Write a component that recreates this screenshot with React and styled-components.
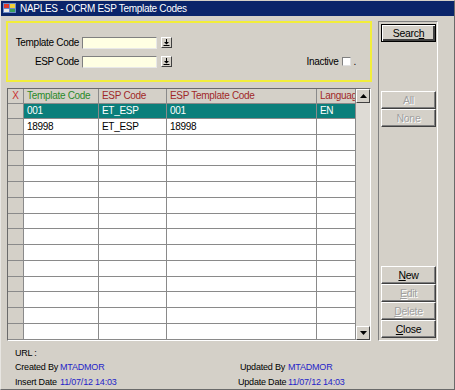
import React from "react";
import styled, { createGlobalStyle } from "styled-components";

const Global = createGlobalStyle`
  body {
    margin: 0;
    background: #ffffff;
    font-family: "Liberation Sans", Arial, sans-serif;
  }
`

const Window = styled.div`
  width: 455px;
  height: 390px;
  box-sizing: border-box;
  background: #d4d0c8;
  border: 1px solid #6a6a6a;
  border-top-color: #d4d0c8;
  border-left-color: #e8e6e2;
  display: flex;
  flex-direction: column;
  font-size: 10px;
  letter-spacing: -0.3px;
  color: #000;
`

const TitleBar = styled.div`
  height: 16px;
  background: #0a246a;
  color: #fff;
  display: flex;
  align-items: center;
  gap: 4px;
  padding-left: 2px;
  font-size: 10px;
`

const Main = styled.div`
  display: flex;
  padding: 5px 0 0 5px;
`

const LeftCol = styled.div`
  width: 366px;
  display: flex;
  flex-direction: column;
`

const FilterBox = styled.div`
  height: 61px;
  box-sizing: border-box;
  border: 2px solid #f2ee3a;
  padding: 14px 14px 0 0;
  display: flex;
  flex-direction: column;
  gap: 7px;
`

const FieldRow = styled.div`
  display: flex;
  align-items: center;
  height: 12px;
`

const Label = styled.span`
  width: 71px;
  text-align: right;
  margin-right: 3px;
  white-space: nowrap;
`

const Input = styled.div`
  width: 75px;
  height: 12px;
  box-sizing: border-box;
  background: #ffffe3;
  border: 1px solid;
  border-color: #808080 #e8e8e8 #e8e8e8 #808080;
`

const DropBtn = styled.div`
  width: 11px;
  height: 11px;
  box-sizing: border-box;
  margin-left: 4px;
  background: #d4d0c8;
  border: 1px solid;
  border-color: #fff #404040 #404040 #fff;
  display: flex;
  align-items: center;
  justify-content: center;
`

const Inactive = styled.div`
  margin-left: auto;
  display: flex;
  align-items: center;
  gap: 3px;
`

const Check = styled.div`
  width: 9px;
  height: 9px;
  box-sizing: border-box;
  background: #fff;
  border: 1px solid;
  border-color: #808080 #e0e0e0 #e0e0e0 #808080;
`

const Grid = styled.div`
  margin: 6px 0 0 1px;
  width: 364px;
  height: 253px;
  box-sizing: border-box;
  border: 1px solid;
  border-color: #6a6a6a #ffffff #ffffff #6a6a6a;
  display: flex;
  background: #fff;
`

const Table = styled.div`
  display: flex;
  flex-direction: column;
  flex: 1;
`

const Row = styled.div`
  display: flex;
  height: ${p => (p.$head ? "15px" : "auto")};
  flex: ${p => (p.$head ? "none" : "1")};
  background: ${p => (p.$selected ? "#0b7f7b" : p.$head ? "#d4d0c8" : "#fff")};
  color: ${p => (p.$selected ? "#fff" : "#000")};
`

const Cell = styled.div`
  width: ${p => p.$w}px;
  box-sizing: border-box;
  border-right: 1px solid #8a8a8a;
  border-bottom: 1px solid #8a8a8a;
  padding-left: 3px;
  display: flex;
  align-items: center;
  white-space: nowrap;
  overflow: hidden;
  color: ${p => p.$color || "inherit"};
`

const RowHead = styled.div`
  width: 16px;
  box-sizing: border-box;
  background: #d4d0c8;
  border-right: 1px solid #8a8a8a;
  border-bottom: 1px solid #8a8a8a;
  display: flex;
  align-items: center;
  justify-content: center;
  color: #c83030;
`

const Scroll = styled.div`
  width: 14px;
  display: flex;
  flex-direction: column;
  background: #dedbd5;
`

const ScrollBtn = styled.div`
  height: 14px;
  box-sizing: border-box;
  background: #d4d0c8;
  border: 1px solid;
  border-color: #fff #404040 #404040 #fff;
  display: flex;
  align-items: center;
  justify-content: center;
`

const Track = styled.div`
  flex: 1;
`

const Panel = styled.div`
  margin-left: 6px;
  width: 60px;
  height: 320px;
  box-sizing: border-box;
  border: 1px solid;
  border-color: #808080 #ffffff #ffffff #808080;
  padding: 2px;
  display: flex;
  flex-direction: column;
`

const Btn = styled.div`
  width: 55px;
  height: 18px;
  box-sizing: border-box;
  background: #d4d0c8;
  border: 1px solid;
  border-color: ${p => (p.$default ? "#000" : "#fff #404040 #404040 #fff")};
  box-shadow: ${p =>
    p.$default
      ? "inset 1px 1px #fff, inset -2px -2px #404040"
      : "inset -1px -1px #808080"};
  display: flex;
  align-items: center;
  justify-content: center;
  color: ${p => (p.$disabled ? "#a0a0a0" : "#000")};
  text-shadow: ${p => (p.$disabled ? "1px 1px #fff" : "none")};
  font-size: 10.5px;
`

const BtnGroup = styled.div`
  display: flex;
  flex-direction: column;
  margin-top: ${p => p.$top || "0"};
`

const Footer = styled.div`
  display: grid;
  grid-template-columns: 45px 178px 47px 1fr;
  grid-auto-rows: 14.5px;
  align-items: center;
  padding: 5px 0 0 14px;
  font-size: 9px;
  letter-spacing: -0.2px;
`

const FootLabel = styled.span`
  text-align: ${p => (p.$right ? "right" : "left")};
  white-space: nowrap;
`

const FootValue = styled.span`
  color: #2424c8;
  padding-left: ${p => (p.$right ? "3px" : "0")};
  white-space: nowrap;
`

const cols = [
  { w: 75, label: "Template Code", color: "#2a8a2a" },
  { w: 68, label: "ESP Code", color: "#a02828" },
  { w: 150, label: "ESP Template Code", color: "#a02828" },
  { w: 39, label: "Languag", color: "#a02828" },
]

const rows = [
  ["001", "ET_ESP", "001", "EN"],
  ["18998", "ET_ESP", "18998", ""],
]

const Arrow = () => (
  <svg width="7" height="7" viewBox="0 0 7 7">
    <path d="M3 0h1v3h2l-2.5 2.5L1 3h2z" fill="#000" />
    <rect x="0.5" y="6" width="6" height="1" fill="#000" />
  </svg>
)

const Tri = ({ up }) => (
  <svg width="7" height="4" viewBox="0 0 7 4">
    <path d={up ? "M3.5 0L7 4H0z" : "M0 0h7L3.5 4z"} fill="#000" />
  </svg>
)

const AppIcon = () => (
  <svg width="13" height="12" viewBox="0 0 13 12">
    <rect x="0" y="1" width="13" height="10" fill="#6a8ac8" />
    <rect x="1" y="2" width="5" height="4" fill="#e03a2a" />
    <rect x="7" y="2" width="5" height="4" fill="#f2d23a" />
    <rect x="1" y="7" width="5" height="3" fill="#e8e8e8" />
    <rect x="7" y="7" width="5" height="3" fill="#3aa05a" />
  </svg>
)

export default function App() {
  const blank = Array.from({ length: 13 }, () => ["", "", "", ""])
  const all = [...rows, ...blank]

  return (
    <>
      <Global />
      <Window>
        <TitleBar>
          <AppIcon />
          <span>NAPLES - OCRM ESP Template Codes</span>
        </TitleBar>

        <Main>
          <LeftCol>
            <FilterBox>
              <FieldRow>
                <Label>Template Code</Label>
                <Input />
                <DropBtn><Arrow /></DropBtn>
              </FieldRow>
              <FieldRow>
                <Label>ESP Code</Label>
                <Input />
                <DropBtn><Arrow /></DropBtn>
                <Inactive>
                  <span>Inactive</span>
                  <Check />
                  <span>.</span>
                </Inactive>
              </FieldRow>
            </FilterBox>

            <Grid>
              <Table>
                <Row $head>
                  <RowHead>X</RowHead>
                  {cols.map(c => (
                    <Cell key={c.label} $w={c.w} $color={c.color}>{c.label}</Cell>
                  ))}
                </Row>
                {all.map((r, i) => (
                  <Row key={i} $selected={i === 0}>
                    <RowHead />
                    {cols.map((c, j) => (
                      <Cell key={j} $w={c.w}>{r[j]}</Cell>
                    ))}
                  </Row>
                ))}
              </Table>
              <Scroll>
                <ScrollBtn><Tri up /></ScrollBtn>
                <Track />
                <ScrollBtn><Tri /></ScrollBtn>
              </Scroll>
            </Grid>
          </LeftCol>

          <Panel>
            <Btn $default>Searc<u>h</u></Btn>
            <BtnGroup $top="49px">
              <Btn $disabled>All</Btn>
              <Btn $disabled>None</Btn>
            </BtnGroup>
            <BtnGroup $top="auto">
              <Btn><u>N</u>ew</Btn>
              <Btn $disabled><u>E</u>dit</Btn>
              <Btn $disabled><u>D</u>elete</Btn>
              <Btn><u>C</u>lose</Btn>
            </BtnGroup>
          </Panel>
        </Main>

        <Footer>
          <FootLabel>URL :</FootLabel>
          <span />
          <span />
          <span />
          <FootLabel>Created By</FootLabel>
          <FootValue>MTADMOR</FootValue>
          <FootLabel $right>Updated By</FootLabel>
          <FootValue $right>MTADMOR</FootValue>
          <FootLabel>Insert Date</FootLabel>
          <FootValue>11/07/12 14:03</FootValue>
          <FootLabel $right>Update Date</FootLabel>
          <FootValue $right>11/07/12 14:03</FootValue>
        </Footer>
      </Window>
    </>
  )
}
